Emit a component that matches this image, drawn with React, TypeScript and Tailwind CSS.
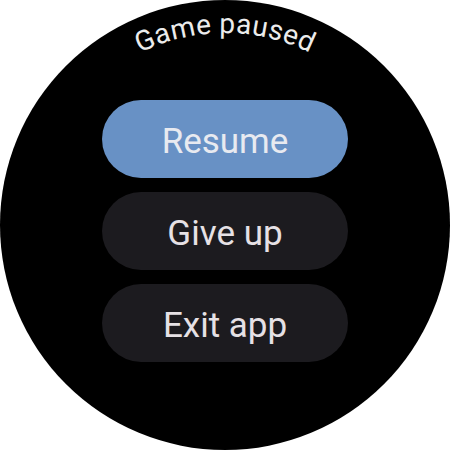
import React from "react";

export default function App() {
  const r = 192;
  const cx = 225;
  const cy = 225;
  const d = `M ${cx - r} ${cy} A ${r} ${r} 0 0 1 ${cx + r} ${cy}`;
  return (
    <div className="w-[450px] h-[450px] bg-white" style={{ fontFamily: "Roboto, 'Noto Sans', sans-serif" }}>
      <div className="relative w-[450px] h-[450px] rounded-full bg-black overflow-hidden">
        <svg className="absolute inset-0" width="450" height="450" viewBox="0 0 450 450">
          <defs>
            <path id="arc" d={d} fill="none" />
          </defs>
          <text fill="#ececec" fontSize="28" letterSpacing="0.4" fontFamily="Roboto, sans-serif">
            <textPath href="#arc" startOffset="50%" textAnchor="middle">
              Game paused
            </textPath>
          </text>
        </svg>
        <div className="flex flex-col items-center pt-[100px] gap-[14px]">
          <button className="w-[246px] h-[78px] rounded-full bg-[#6891c5] text-[#e8eaf0] text-[35px] leading-none flex items-center justify-center pt-1">
            Resume
          </button>
          <button className="w-[246px] h-[78px] rounded-full bg-[#1c1b1f] text-[#e6e1e5] text-[35px] leading-none flex items-center justify-center pt-1">
            Give up
          </button>
          <button className="w-[246px] h-[78px] rounded-full bg-[#1c1b1f] text-[#e6e1e5] text-[35px] leading-none flex items-center justify-center pt-1">
            Exit app
          </button>
        </div>
      </div>
    </div>
  );
}
